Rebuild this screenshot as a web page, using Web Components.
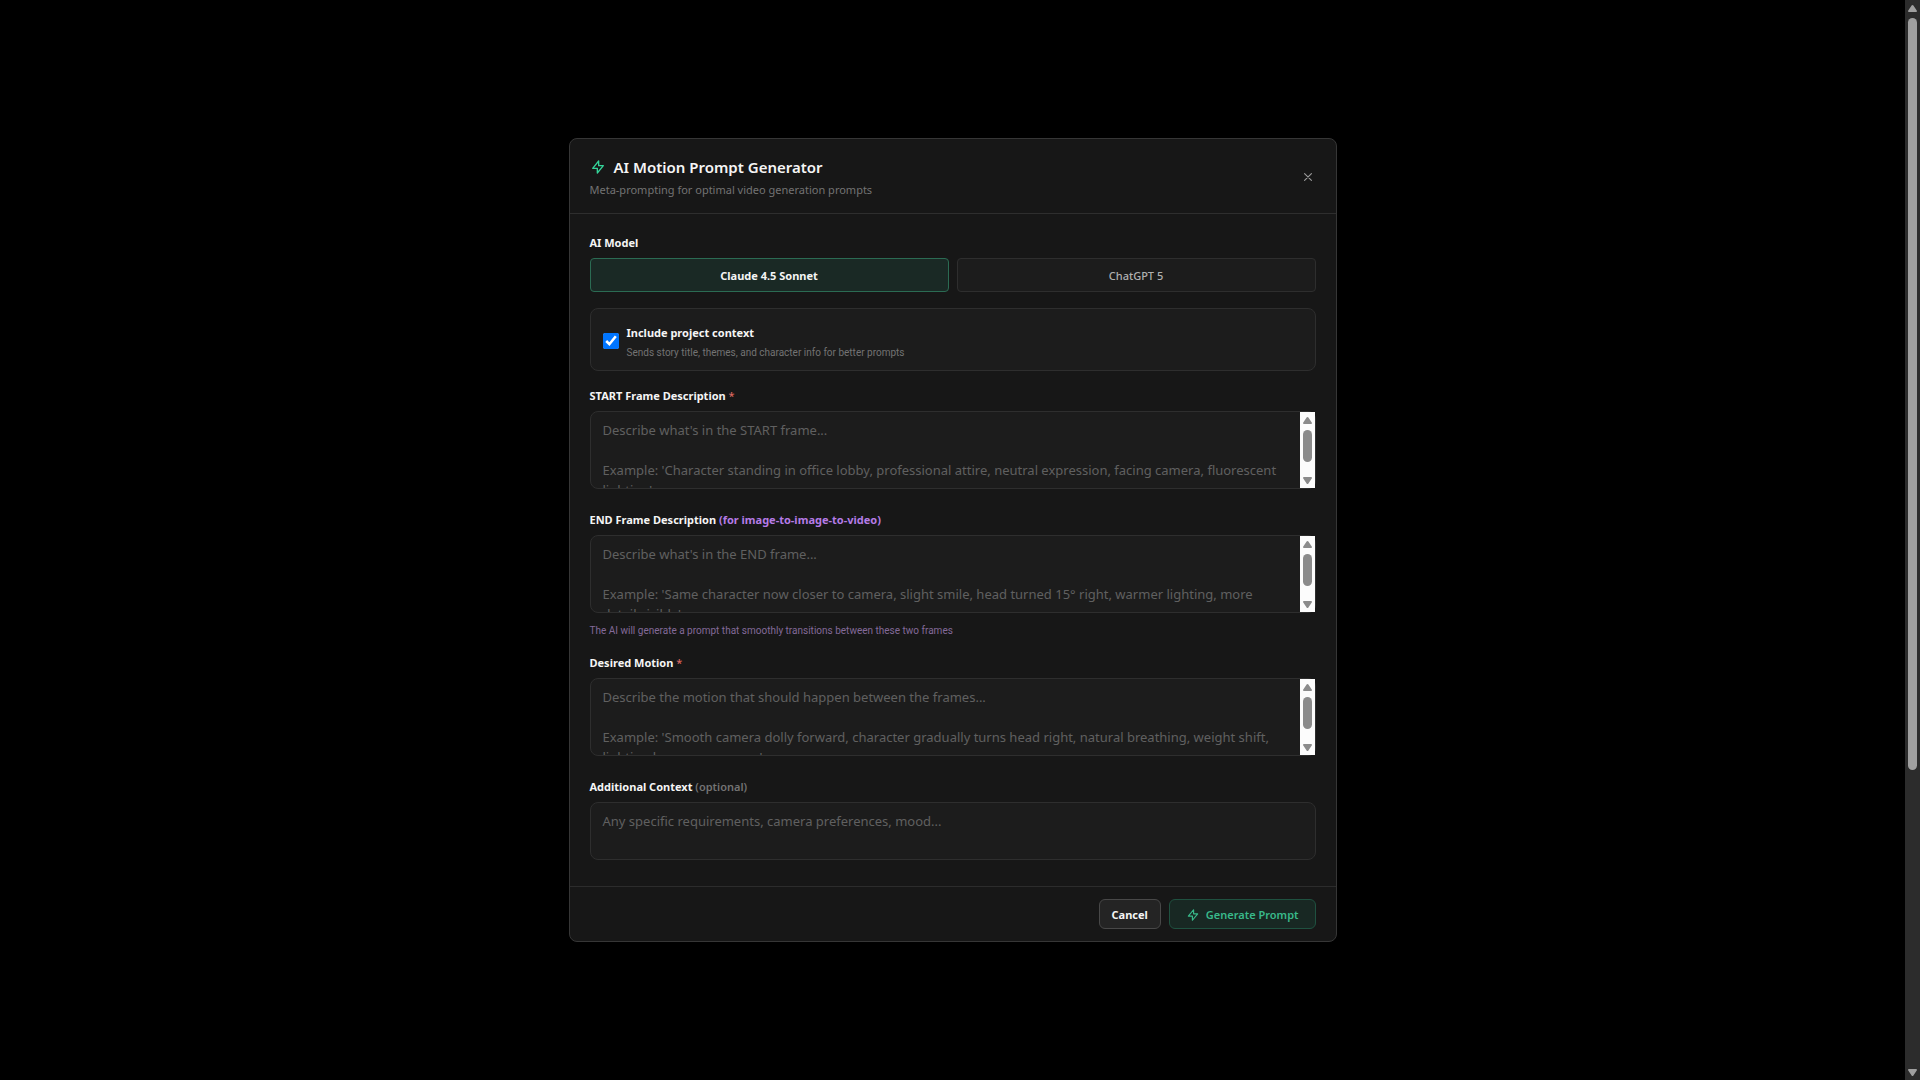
<!DOCTYPE html>
<html lang="en">
<head>
<meta charset="utf-8">
<title>AI Motion Prompt Generator</title>
<style>
  html, body { margin: 0; height: 100%; background: #000; }
  body { font-family: "Noto Sans", "Open Sans", sans-serif; color: #f5f5f5; }
  .accent { color: #b57be6; }
  .required { color: #d9665f; font-weight: 500; }
  .muted { color: #737373; font-weight: 600; }
</style>
</head>
<body>
<app-viewport>
  <prompt-dialog>
    <dialog-header slot="header">
      <span slot="title">AI Motion Prompt Generator</span>
      <span slot="subtitle">Meta-prompting for optimal video generation prompts</span>
    </dialog-header>

    <model-picker>
      <span slot="label">AI Model</span>
      <span slot="first">Claude 4.5 Sonnet</span>
      <span slot="second">ChatGPT 5</span>
    </model-picker>

    <context-toggle>
      <span slot="label">Include project context</span>
      <span slot="hint">Sends story title, themes, and character info for better prompts</span>
    </context-toggle>

    <text-field rows="3" scroll placeholder="Describe what's in the START frame...&#10;&#10;Example: 'Character standing in office lobby, professional attire, neutral expression, facing camera, fluorescent lighting'">START Frame Description <span class="required">*</span></text-field>

    <text-field rows="3" scroll placeholder="Describe what's in the END frame...&#10;&#10;Example: 'Same character now closer to camera, slight smile, head turned 15° right, warmer lighting, more detail visible'">END Frame Description <span class="accent">(for image-to-image-to-video)</span><span slot="hint">The AI will generate a prompt that smoothly transitions between these two frames</span></text-field>

    <text-field rows="3" scroll placeholder="Describe the motion that should happen between the frames...&#10;&#10;Example: 'Smooth camera dolly forward, character gradually turns head right, natural breathing, weight shift, lighting becomes warmer'">Desired Motion <span class="required">*</span></text-field>

    <text-field rows="2" placeholder="Any specific requirements, camera preferences, mood...">Additional Context <span class="muted">(optional)</span></text-field>

    <action-button slot="footer">Cancel</action-button>
    <action-button slot="footer" primary>Generate Prompt</action-button>
  </prompt-dialog>
</app-viewport>

<script>
  class BaseElement extends HTMLElement {
    constructor() {
      super();
      this.attachShadow({ mode: 'open' }).innerHTML =
        `<style>*, ::before, ::after { box-sizing: border-box; } button, textarea, input { font-family: inherit; margin: 0; } button { cursor: pointer; }</style>` + this.render();
    }
  }

  // Classic scroll bar: arrow, track with thumb, arrow.
  customElements.define('scroll-bar', class extends BaseElement {
    render() {
      return `<style>
        :host { display: flex; flex-direction: column; align-items: center; flex: none; width: 15px;
          padding: 5px 0 4px; gap: 6px; background: var(--track, #fcfcfc); color: var(--thumb, #8b8b8b); }
        svg { display: block; flex: none; width: 9px; height: 7px; fill: currentColor; }
        .track { flex: 1; width: 9px; min-height: 0; }
        .thumb { height: var(--size, 78%); border-radius: 5px; background: currentColor; }
      </style>
      <svg viewBox="0 0 9 7"><path d="M3.6.6a1 1 0 0 1 1.8 0L8.9 5.7Q9.2 7 8.1 7H.9Q-.2 7 .1 5.7z"/></svg>
      <div class="track"><div class="thumb"></div></div>
      <svg viewBox="0 0 9 7"><path d="M3.6 6.4a1 1 0 0 0 1.8 0L8.9 1.3Q9.2 0 8.1 0H.9Q-.2 0 .1 1.3z"/></svg>`;
    }
  });

  customElements.define('bolt-icon', class extends BaseElement {
    render() {
      return `<style>
        :host { display: block; flex: none; width: var(--icon, 16px); height: var(--icon, 16px); }
        svg { display: block; width: 100%; height: 100%; fill: none; stroke: currentColor; stroke-width: 2;
          stroke-linecap: round; stroke-linejoin: round; }
      </style>
      <svg viewBox="0 0 24 24"><path d="M13 10V3L4 14h7v7l9-11h-7z"/></svg>`;
    }
  });

  customElements.define('app-viewport', class extends BaseElement {
    render() {
      return `<style>
        :host { display: flex; min-height: 100vh; }
        main { flex: 1; min-width: 0; display: flex; align-items: center; justify-content: center; }
        scroll-bar { --track: #2c2c2c; --thumb: #9f9f9f; --size: 72%; }
      </style>
      <main><slot></slot></main>
      <scroll-bar></scroll-bar>`;
    }
  });

  customElements.define('prompt-dialog', class extends BaseElement {
    render() {
      return `<style>
        :host { display: block; width: 100%; max-width: 768px; border: 1px solid #363636; border-radius: 8px;
          background: #171717; box-sizing: border-box; }
        .body { display: flex; flex-direction: column; gap: 16px; padding: 20px; }
        footer { display: flex; justify-content: flex-end; gap: 8px; padding: 12px 20px; border-top: 1px solid #2c2c2c; }
      </style>
      <section role="dialog" aria-label="AI Motion Prompt Generator">
        <slot name="header"></slot>
        <div class="body"><slot></slot></div>
        <footer><slot name="footer"></slot></footer>
      </section>`;
    }
  });

  customElements.define('dialog-header', class extends BaseElement {
    render() {
      return `<style>
        :host { display: block; }
        header { display: flex; align-items: center; justify-content: space-between; padding: 16px 20px 14px;
          border-bottom: 1px solid #2e2e2e; }
        h2 { display: flex; align-items: center; gap: 8px; margin: 0; font-size: 15px; line-height: 24px; font-weight: 600; }
        bolt-icon { color: #34d399; }
        p { margin: 2px 0 0; font-size: 11px; line-height: 18px; color: #737373; }
        button { display: block; padding: 0; border: 0; background: none; color: #9a9a9a; }
        button svg { display: block; width: 16px; height: 16px; fill: none; stroke: currentColor; stroke-width: 2; stroke-linecap: round; }
      </style>
      <header>
        <div>
          <h2><bolt-icon></bolt-icon><slot name="title"></slot></h2>
          <p><slot name="subtitle"></slot></p>
        </div>
        <button type="button" aria-label="Close"><svg viewBox="-2 -2 28 28"><path d="M6 18L18 6M6 6l12 12"/></svg></button>
      </header>`;
    }
  });

  customElements.define('model-picker', class extends BaseElement {
    render() {
      return `<style>
        :host { display: block; font-size: 11px; line-height: 18px; }
        .label { margin-bottom: 6px; font-weight: 700; }
        .options { display: grid; grid-template-columns: 1fr 1fr; gap: 8px; }
        button { padding: 8px 8px 6px; border: 1px solid #2e2e2e; border-radius: 4px; background: #1c1c1c; color: #b0b0b0;
          font-size: 11px; line-height: 18px; font-weight: 500; }
        button[aria-pressed="true"] { border-color: #2b6b53; background: #1a2925; color: #f5f5f5; font-weight: 700; }
      </style>
      <div class="label" id="label"><slot name="label"></slot></div>
      <div class="options" role="group" aria-labelledby="label">
        <button type="button" aria-pressed="true"><slot name="first"></slot></button>
        <button type="button" aria-pressed="false"><slot name="second"></slot></button>
      </div>`;
    }
  });

  customElements.define('context-toggle', class extends BaseElement {
    render() {
      return `<style>
        :host { display: block; }
        label { display: flex; align-items: center; gap: 8px; padding: 12px 12px 9px; border: 1px solid #2e2e2e;
          border-radius: 8px; background: #1c1c1c; }
        input { flex: none; width: 16px; height: 16px; accent-color: #0075ff; }
        .text { display: flex; flex-direction: column; }
        .name { font-size: 11px; line-height: 24px; font-weight: 700; }
        .hint { font: 10px/16px Roboto, sans-serif; color: #737373; }
      </style>
      <label>
        <input type="checkbox" checked>
        <span class="text">
          <span class="name"><slot name="label"></slot></span>
          <span class="hint"><slot name="hint"></slot></span>
        </span>
      </label>`;
    }
  });

  customElements.define('text-field', class extends BaseElement {
    render() {
      const scroll = this.hasAttribute('scroll');
      return `<style>
        :host { display: block; }
        label { display: block; margin-bottom: 6px; font-size: 11px; line-height: 18px; font-weight: 700; }
        .box { display: flex; margin-bottom: 6px; border: 1px solid #2e2e2e; border-radius: 8px; background: #1c1c1c; }
        textarea { display: block; flex: 1; min-width: 0; padding: 8px 12px; border: 0; outline: 0; resize: none;
          overflow: hidden; background: none; color: #f5f5f5; font-size: 13px; line-height: 20px; }
        textarea::placeholder { color: #606060; opacity: 1; }
        .hint { display: block; font: 10px/15px Roboto, sans-serif; color: #836a99; }
        .hint ::slotted(*) { display: block; padding-top: 4px; }
      </style>
      <label for="input"><slot></slot></label>
      <div class="box">
        <textarea id="input" rows="${this.getAttribute('rows')}"></textarea>
        ${scroll ? '<scroll-bar></scroll-bar>' : ''}
      </div>
      <div class="hint"><slot name="hint"></slot></div>`;
    }
    connectedCallback() {
      this.shadowRoot.querySelector('textarea').placeholder = this.getAttribute('placeholder');
    }
  });

  customElements.define('action-button', class extends BaseElement {
    render() {
      const primary = this.hasAttribute('primary');
      return `<style>
        :host { display: block; }
        button { display: flex; align-items: center; gap: 6px; padding: 6px 12px 4px; border: 1px solid #484848;
          border-radius: 6px; background: #242424; color: #f5f5f5; font-size: 11px; line-height: 18px; font-weight: 700; }
        .primary { padding: 6px 16px 4px; border-color: #1f5140; background: #182823; color: #38b98a; font-weight: 600; }
        bolt-icon { --icon: 14px; }
      </style>
      <button type="button" class="${primary ? 'primary' : ''}">${primary ? '<bolt-icon></bolt-icon>' : ''}<slot></slot></button>`;
    }
  });
</script>
</body>
</html>
